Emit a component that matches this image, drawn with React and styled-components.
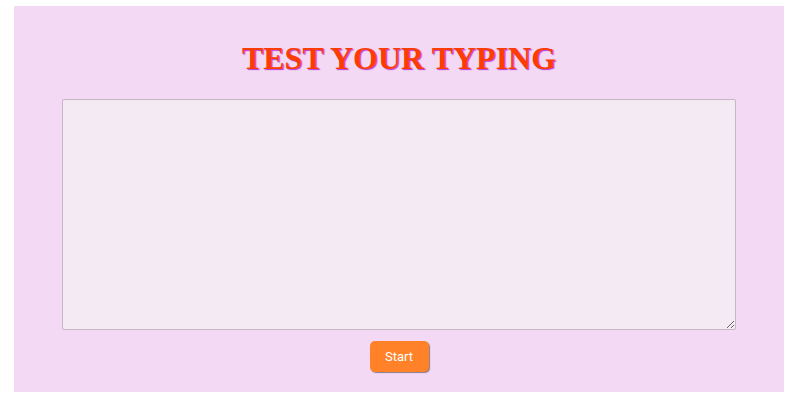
import React from "react";
import styled, { createGlobalStyle } from "styled-components";

const GlobalStyle = createGlobalStyle`
  body {
    margin: 0;
    background: #ffffff;
    font-family: "Liberation Serif", serif;
  }
`;

const TypingTest = () => {
  return (
    <>
      <GlobalStyle />
      <Wrapper>
        <Title>TEST YOUR TYPING</Title>
        <TypingArea />
        <StartButton>Start</StartButton>
      </Wrapper>
    </>
  );
};

const Wrapper = styled.div`
  margin: 6px 11px 0 14px;
  height: 386px;
  box-sizing: border-box;
  background: #f3d9f3;
  display: flex;
  flex-direction: column;
  align-items: center;
  padding-top: 34px;
`;

const Title = styled.h1`
  margin: 0;
  font-family: "Liberation Serif", "Times New Roman", serif;
  font-weight: bold;
  font-size: 32px;
  line-height: 37px;
  color: #ff3c00;
  text-shadow: 1px 1px 1px #b03ad8;
`;

const TypingArea = styled.textarea`
  margin-top: 22px;
  width: 674px;
  height: 231px;
  box-sizing: border-box;
  background: #f3eaf3;
  border: 1px solid #c6b6c6;
  border-radius: 2px;
  resize: both;
  outline: none;
`;

const StartButton = styled.button`
  margin-top: 11px;
  width: 59px;
  height: 31px;
  border: none;
  border-radius: 5px;
  background: #ff8228;
  color: #ffffff;
  font-family: Roboto, "Liberation Sans", sans-serif;
  font-size: 13px;
  box-shadow: 1px 1px 1px #8a7a8a;
  cursor: pointer;
`;

export default TypingTest;
